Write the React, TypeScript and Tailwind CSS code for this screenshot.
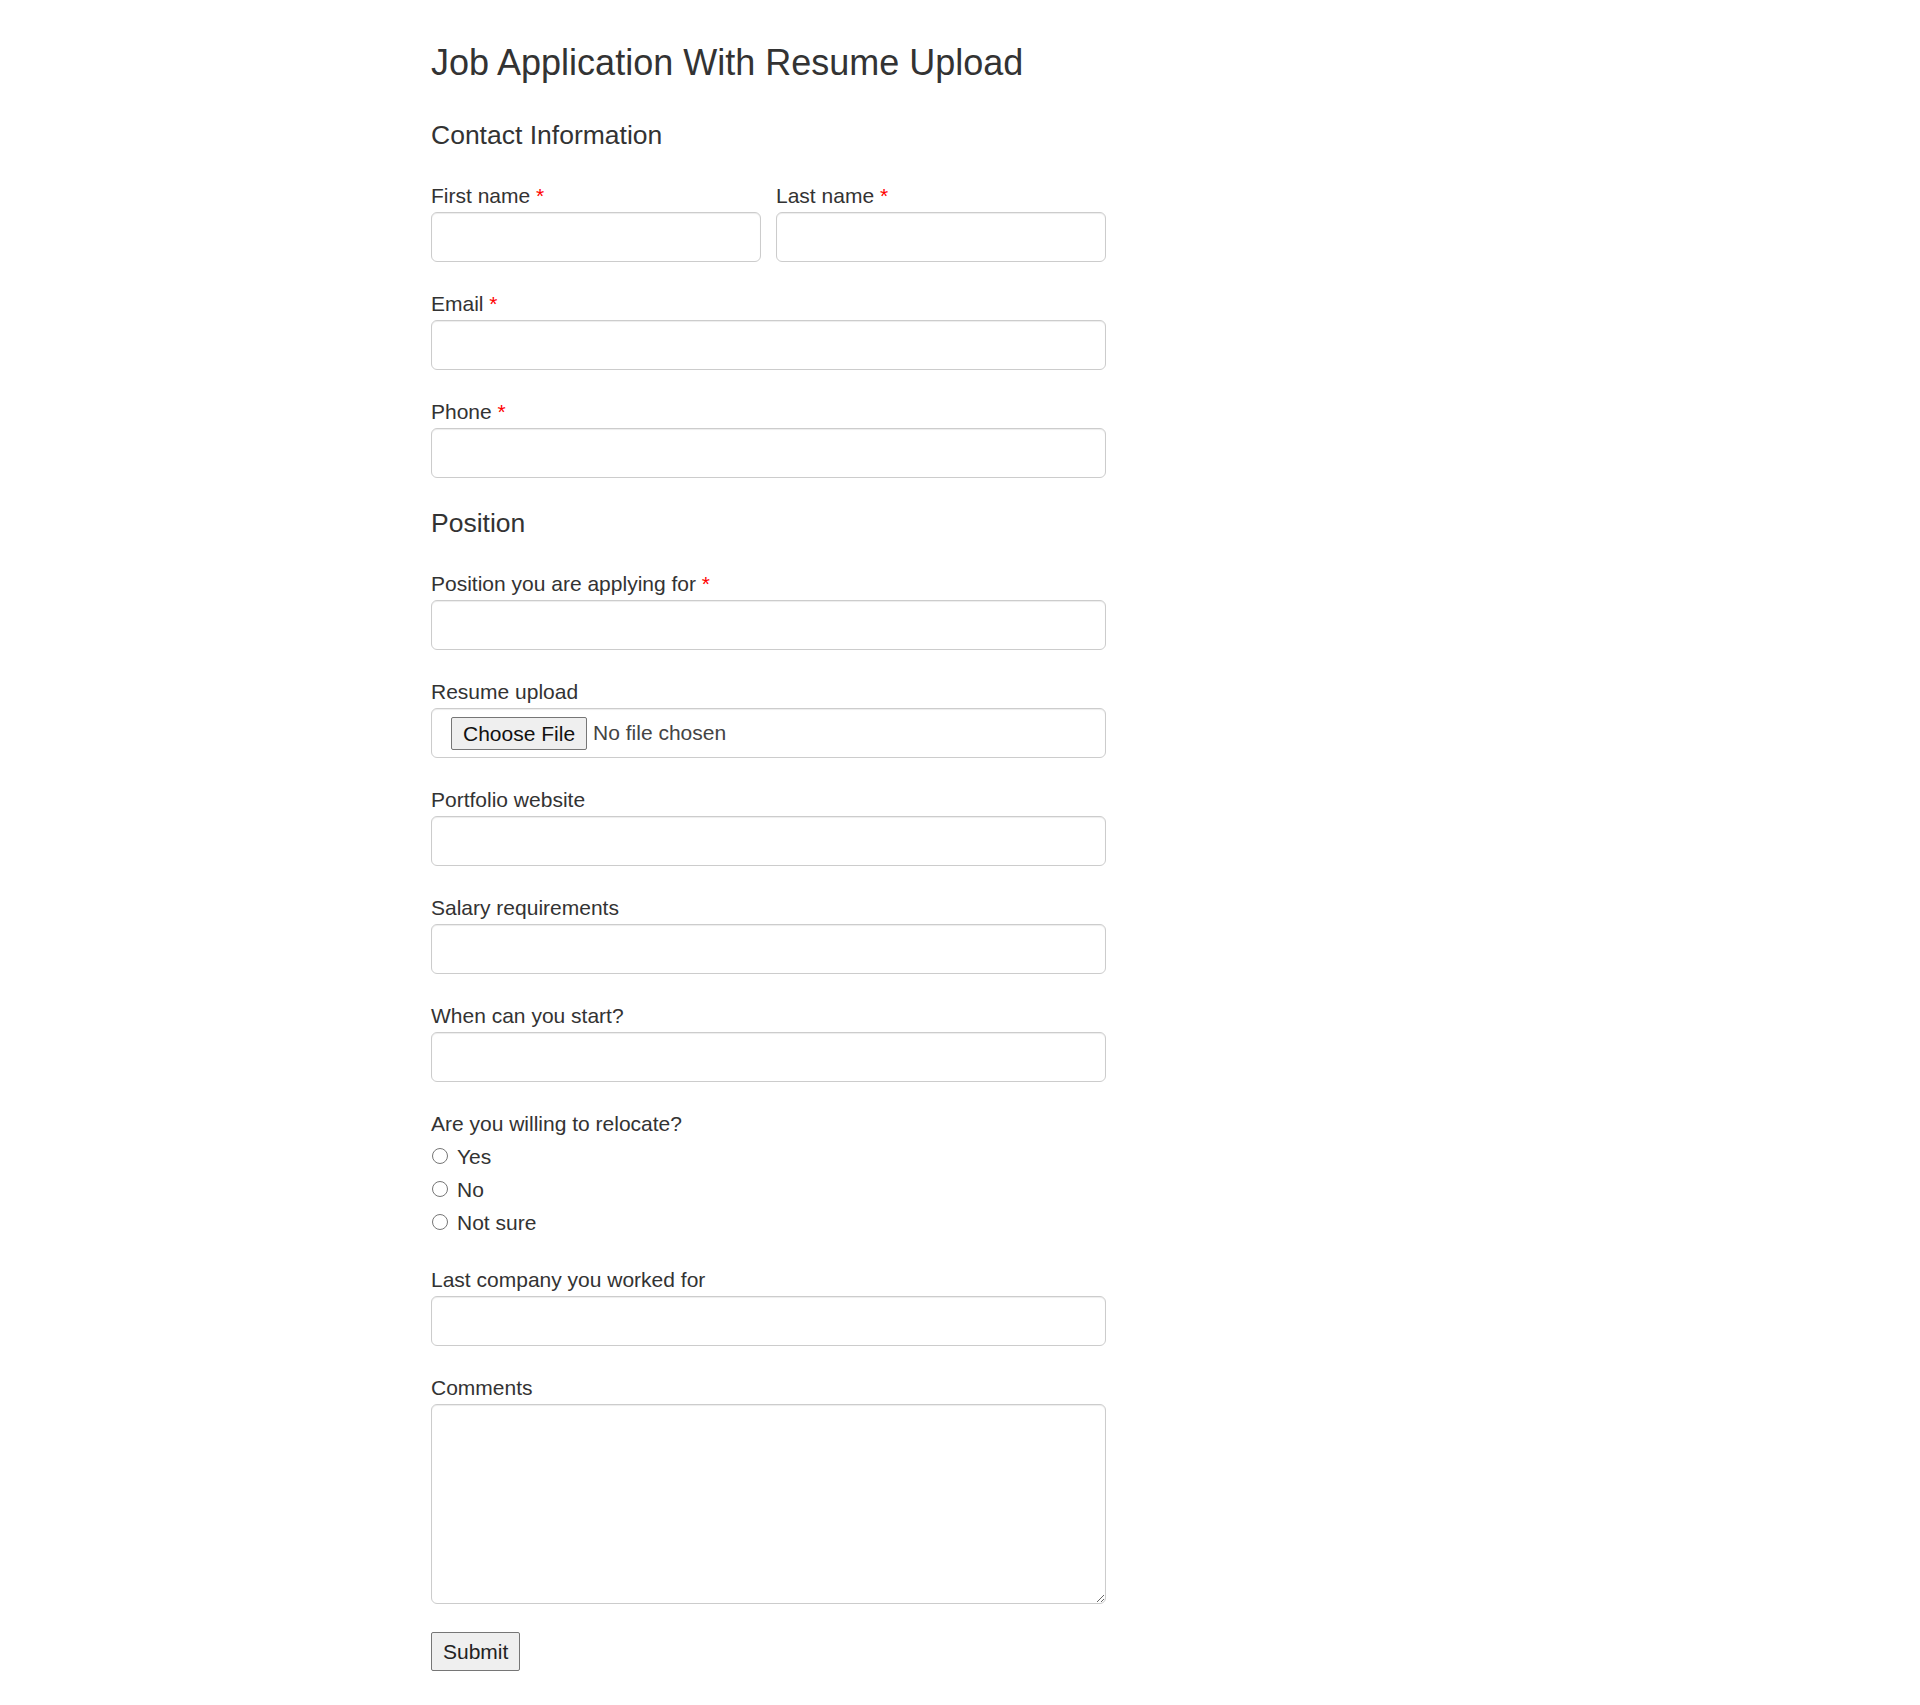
import React from "react";
import clsx from "clsx";

const inputCls =
  "block w-full h-[50px] rounded-[6px] border border-[#cccccc] bg-white px-[18px] text-[21px] text-[#555555] shadow-[inset_0_1px_1px_rgba(0,0,0,0.075)] outline-none";

function Field({
  label,
  required,
  className,
  children,
}: {
  label: string;
  required?: boolean;
  className?: string;
  children: React.ReactNode;
}) {
  return (
    <div className={clsx("mb-[27px]", className)}>
      <label className="mb-px block h-[30px] text-[21px] leading-[30px]">
        {label}
        {required && <span className="text-[#ff0000]"> *</span>}
      </label>
      {children}
    </div>
  );
}

export default function App() {
  return (
    <div className="min-h-[1705px] bg-white font-['Liberation_Sans',Arial,sans-serif] text-[#333333]">
      <div className="mx-auto w-[1058px] pt-[43px]">
        <h1 className="h-[40px] text-[36px] leading-[40px]">Job Application With Resume Upload</h1>

        <form className="w-[675px]" onSubmit={(e) => e.preventDefault()}>
          <h3 className="mt-[37px] mb-[31px] h-[30px] text-[26.5px] leading-[30px]">Contact Information</h3>

          <div className="grid grid-cols-2 gap-x-[15px]">
            <Field label="First name" required>
              <input type="text" className={inputCls} />
            </Field>
            <Field label="Last name" required>
              <input type="text" className={inputCls} />
            </Field>
          </div>

          <Field label="Email" required>
            <input type="email" className={inputCls} />
          </Field>
          <Field label="Phone" required>
            <input type="tel" className={inputCls} />
          </Field>

          <h3 className="mt-[30px] mb-[31px] h-[30px] text-[26.5px] leading-[30px]">Position</h3>

          <Field label="Position you are applying for" required>
            <input type="text" className={inputCls} />
          </Field>

          <Field label="Resume upload">
            <div className="flex h-[50px] w-full items-center rounded-[6px] border border-[#cccccc] bg-white pl-[19px] shadow-[inset_0_1px_1px_rgba(0,0,0,0.075)]">
              <button
                type="button"
                className="h-[33px] rounded-[2px] border border-[#767676] bg-[#efefef] px-[11px] text-[21px] leading-[31px] text-[#111111]"
              >
                Choose File
              </button>
              <span className="ml-[6px] text-[21px] text-[#444444]">No file chosen</span>
            </div>
          </Field>

          <Field label="Portfolio website">
            <input type="url" className={inputCls} />
          </Field>
          <Field label="Salary requirements">
            <input type="text" className={inputCls} />
          </Field>
          <Field label="When can you start?">
            <input type="text" className={inputCls} />
          </Field>

          <div className="mb-[26px]">
            <p className="mb-px h-[30px] text-[21px] leading-[30px]">Are you willing to relocate?</p>
            {["Yes", "No", "Not sure"].map((opt) => (
              <label key={opt} className="flex h-[33px] items-center text-[21px] leading-[33px]">
                <input
                  type="radio"
                  name="relocate"
                  className="mr-[9px] ml-px h-[16px] w-[16px] -translate-y-[1px] appearance-none rounded-full border border-[#767676] bg-white"
                />
                {opt}
              </label>
            ))}
          </div>

          <Field label="Last company you worked for">
            <input type="text" className={inputCls} />
          </Field>

          <Field label="Comments" className="mb-[28px]">
            <textarea className="block h-[200px] w-full resize rounded-[6px] border border-[#cccccc] bg-white px-[18px] py-[9px] text-[21px] shadow-[inset_0_1px_1px_rgba(0,0,0,0.075)] outline-none" />
          </Field>

          <button
            type="submit"
            className="h-[39px] rounded-[2px] border border-[#767676] bg-[#efefef] px-[11px] text-[21px] leading-[37px] text-[#222222]"
          >
            Submit
          </button>
        </form>
      </div>
    </div>
  );
}
